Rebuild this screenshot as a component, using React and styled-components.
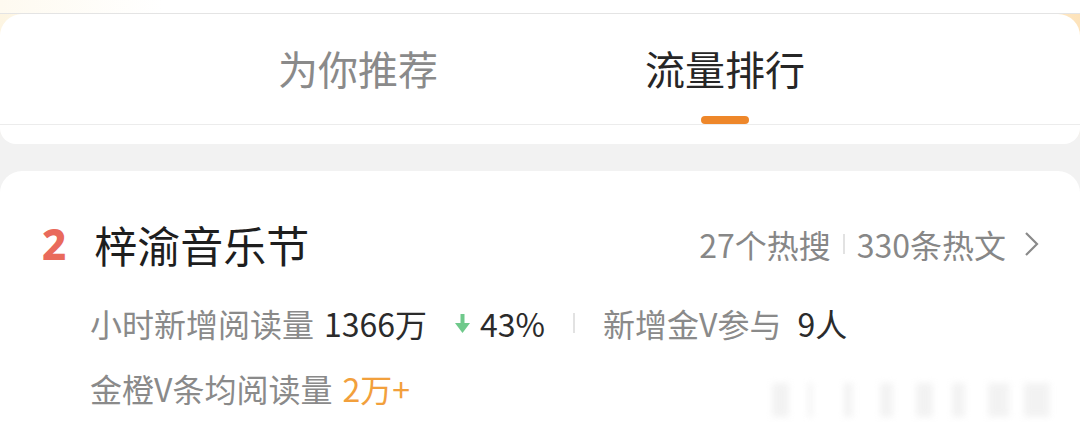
import React from 'react';
import styled, { createGlobalStyle } from 'styled-components';

const GlobalStyle = createGlobalStyle`
  html, body {
    margin: 0;
    padding: 0;
    background: #f2f2f2;
    font-family: "Noto Sans CJK SC", "Noto Sans", sans-serif;
  }
`;

const Page = styled.div`
  width: 1080px;
  height: 422px;
  overflow: hidden;
  background: #f2f2f2;
`;

const TopStrip = styled.div`
  height: 13px;
  background: linear-gradient(90deg, #fefaf0 0%, #ffffff 15%, #ffffff 100%);
  border-bottom: 1px solid #e4e4e4;
`;

const TabsArea = styled.div`
  background:
    linear-gradient(180deg, rgba(242, 242, 242, 0) 0%, rgba(242, 242, 242, 0) 40%, #f2f2f2 80%),
    linear-gradient(90deg, #fdf5e2 0%, #fffdf8 12%, #ffffff 40%, #fffaf0 85%, #fde3bb 100%);
  padding-bottom: 27px;
`;

const TabCard = styled.div`
  background: #fff;
  border-radius: 22px 22px 16px 16px;
  padding-bottom: 19px;
`;

const TabRow = styled.div`
  display: flex;
  justify-content: center;
  gap: 207px;
  padding-top: 30px;
  border-bottom: 1px solid #ececec;
  padding-left: 3px;
`;

const Tab = styled.div`
  display: flex;
  flex-direction: column;
  align-items: center;
  gap: 24px;
  font-size: 40px;
  line-height: 48px;
  color: ${p => (p.$active ? '#262626' : '#8a8a8a')};
`;

const Indicator = styled.span`
  width: 48px;
  height: 8px;
  border-radius: 4px;
  background: ${p => (p.$active ? '#ee872a' : 'transparent')};
`;

const Card = styled.div`
  position: relative;
  background: #fff;
  border-radius: 22px 22px 0 0;
  height: 260px;
  padding: 45px 40px 0 42px;
  box-sizing: border-box;
`;

const HeadRow = styled.div`
  display: flex;
  align-items: center;
  height: 56px;
`;

const Rank = styled.span`
  font-family: "Noto Sans", sans-serif;
  font-size: 42px;
  font-weight: 800;
  color: #e96a5b;
  line-height: 1;
  margin-right: 28px;
`;

const Title = styled.span`
  font-size: 43px;
  color: #1e1e1e;
  line-height: 56px;
  flex: 1;
`;

const Meta = styled.div`
  display: flex;
  align-items: center;
  font-size: 32px;
  color: #878787;
  gap: 12px;
`;

const ThinBar = styled.span`
  width: 2px;
  height: ${p => p.$h || 20}px;
  background: #e2e2e2;
  display: inline-block;
`;

const StatRow = styled.div`
  display: flex;
  align-items: center;
  margin-left: 48px;
  margin-top: ${p => p.$mt}px;
  font-size: 32px;
  line-height: 40px;
  white-space: pre;
`;

const Label = styled.span`
  color: #8a8a8a;
`;

const Value = styled.span`
  color: ${p => p.$color || '#2b2b2b'};
  margin-left: ${p => p.$ml || 10}px;
`;

const Trend = styled.span`
  display: inline-flex;
  align-items: center;
  gap: 10px;
  margin-left: 28px;
  color: #2b2b2b;
`;

const Sep = styled.span`
  margin: 0 28px;
  display: inline-flex;
`;

const Watermark = styled.div`
  position: absolute;
  right: 20px;
  bottom: 8px;
  font-size: 34px;
  color: #e4e4e4;
  filter: blur(3px);
  opacity: 0.45;
  letter-spacing: 2px;
`;

function DownArrow() {
  return (
    <svg width="15" height="19" viewBox="0 0 15 19">
      <rect x="5.5" y="0" width="4" height="10" fill="#6fc98b" />
      <polygon points="0,9 15,9 7.5,19" fill="#6fc98b" />
    </svg>
  );
}

function Chevron() {
  return (
    <svg width="18" height="26" viewBox="0 0 18 26" style={{ marginLeft: 4 }}>
      <polyline points="4,2 15,13 4,24" fill="none" stroke="#8a8a8a" strokeWidth="2.2" />
    </svg>
  );
}

export default function App() {
  return (
    <Page>
      <GlobalStyle />
      <TopStrip />
      <TabsArea>
        <TabCard>
          <TabRow>
            <Tab>
              为你推荐
              <Indicator />
            </Tab>
            <Tab $active>
              流量排行
              <Indicator $active />
            </Tab>
          </TabRow>
        </TabCard>
      </TabsArea>
      <Card>
        <HeadRow>
          <Rank>2</Rank>
          <Title>梓渝音乐节</Title>
          <Meta>
            27个热搜
            <ThinBar $h={20} />
            330条热文
            <Chevron />
          </Meta>
        </HeadRow>
        <StatRow $mt={31}>
          <Label>小时新增阅读量</Label>
          <Value>1366万</Value>
          <Trend>
            <DownArrow />
            43%
          </Trend>
          <Sep>
            <ThinBar $h={20} />
          </Sep>
          <Label>新增金V参与</Label>
          <Value $ml={16}>9人</Value>
        </StatRow>
        <StatRow $mt={25}>
          <Label>金橙V条均阅读量</Label>
          <Value $color="#f2a03c">2万+</Value>
        </StatRow>
        <Watermark>▌▏▎▍▌▍▋▊</Watermark>
      </Card>
    </Page>
  );
}
